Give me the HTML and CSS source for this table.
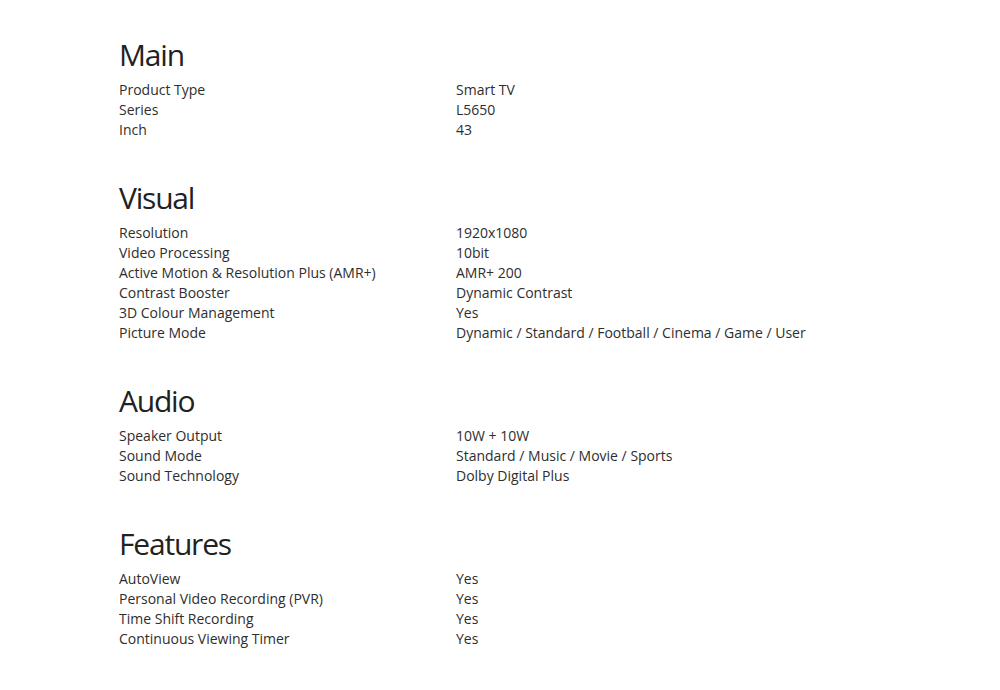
FILE: index.html
```html
<!DOCTYPE html>
<html>
<head>
<meta charset="utf-8">
<link rel="stylesheet" href="styles.css">
</head>
<body>
<div class="specs">
  <section class="group">
    <h2 class="group-title">Main</h2>
    <div class="row"><span class="label">Product Type</span><span class="value">Smart TV</span></div>
    <div class="row"><span class="label">Series</span><span class="value">L5650</span></div>
    <div class="row"><span class="label">Inch</span><span class="value">43</span></div>
  </section>
  <section class="group">
    <h2 class="group-title">Visual</h2>
    <div class="row"><span class="label">Resolution</span><span class="value">1920x1080</span></div>
    <div class="row"><span class="label">Video Processing</span><span class="value">10bit</span></div>
    <div class="row"><span class="label">Active Motion &amp; Resolution Plus (AMR+)</span><span class="value">AMR+ 200</span></div>
    <div class="row"><span class="label">Contrast Booster</span><span class="value">Dynamic Contrast</span></div>
    <div class="row"><span class="label">3D Colour Management</span><span class="value">Yes</span></div>
    <div class="row"><span class="label">Picture Mode</span><span class="value">Dynamic / Standard / Football / Cinema / Game / User</span></div>
  </section>
  <section class="group">
    <h2 class="group-title">Audio</h2>
    <div class="row"><span class="label">Speaker Output</span><span class="value">10W + 10W</span></div>
    <div class="row"><span class="label">Sound Mode</span><span class="value">Standard / Music / Movie / Sports</span></div>
    <div class="row"><span class="label">Sound Technology</span><span class="value">Dolby Digital Plus</span></div>
  </section>
  <section class="group">
    <h2 class="group-title">Features</h2>
    <div class="row"><span class="label">AutoView</span><span class="value">Yes</span></div>
    <div class="row"><span class="label">Personal Video Recording (PVR)</span><span class="value">Yes</span></div>
    <div class="row"><span class="label">Time Shift Recording</span><span class="value">Yes</span></div>
    <div class="row"><span class="label">Continuous Viewing Timer</span><span class="value">Yes</span></div>
  </section>
</div>
</body>
</html>
```

FILE: styles.css
```css
html, body {
  margin: 0;
  padding: 0;
  background: #ffffff;
}
body {
  font-family: "Open Sans", "Noto Sans", sans-serif;
  color: #2e2e2e;
}
.specs {
  padding: 37px 0 0 119px;
  display: flex;
  flex-direction: column;
  gap: 40px;
}
.group {
  display: flex;
  flex-direction: column;
}
.group-title {
  margin: 0 0 7px 0;
  font-family: "Open Sans", sans-serif;
  font-weight: 400;
  font-size: 30px;
  line-height: 36px;
  letter-spacing: -1.2px;
  color: #222222;
}
.row {
  display: grid;
  grid-template-columns: 337px 1fr;
  font-size: 14px;
  line-height: 20px;
}
```
